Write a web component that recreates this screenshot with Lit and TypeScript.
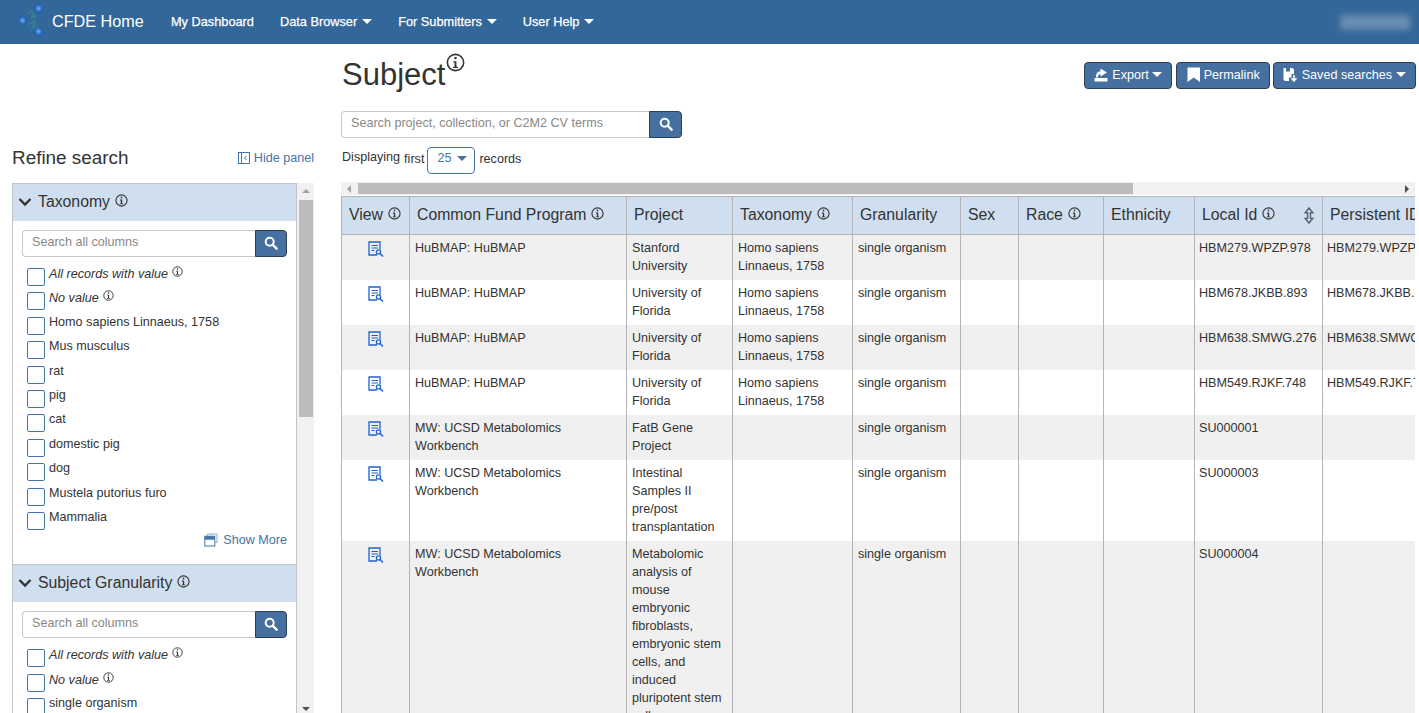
import { LitElement, html, css, svg } from "lit";
import { customElement } from "lit/decorators.js";

const columns = [
    { name: "View", width: 68, info: true },
    { name: "Common Fund Program", width: 217, info: true },
    { name: "Project", width: 106 },
    { name: "Taxonomy", width: 120, info: true },
    { name: "Granularity", width: 108 },
    { name: "Sex", width: 58 },
    { name: "Race", width: 85, info: true },
    { name: "Ethnicity", width: 91 },
    { name: "Local Id", width: 128, info: true, sort: true },
    { name: "Persistent ID", width: 140 },
];

const homo = "Homo sapiens Linnaeus, 1758";
const hubmap = "HuBMAP: HuBMAP";
const mw = "MW: UCSD Metabolomics Workbench";

const rows = [
    [hubmap, "Stanford University", homo, "HBM279.WPZP.978", "HBM279.WPZP.978"],
    [hubmap, "University of Florida", homo, "HBM678.JKBB.893", "HBM678.JKBB.893"],
    [hubmap, "University of Florida", homo, "HBM638.SMWG.276", "HBM638.SMWG.276"],
    [hubmap, "University of Florida", homo, "HBM549.RJKF.748", "HBM549.RJKF.748"],
    [mw, "FatB Gene Project", "", "SU000001", ""],
    [mw, "Intestinal Samples II pre/post transplantation", "", "SU000003", ""],
    [mw, "Metabolomic analysis of mouse embryonic fibroblasts, embryonic stem cells, and induced pluripotent stem cells", "", "SU000004", ""],
];

const taxa = ["Homo sapiens Linnaeus, 1758", "Mus musculus", "rat", "pig", "cat", "domestic pig", "dog", "Mustela putorius furo", "Mammalia"];

const searchIcon = html`<svg class="search-icon" viewBox="0 0 16 16"><circle cx="6.5" cy="6.5" r="4.6" fill="none" stroke="currentColor" stroke-width="2.2"/><path d="M10 10l4.4 4.4" stroke="currentColor" stroke-width="2.8" stroke-linecap="round"/></svg>`;

const infoIcon = html`<svg class="info" viewBox="0 0 14 14"><circle cx="7" cy="7" r="6" fill="none" stroke="currentColor" stroke-width="1.2"/><rect x="6.2" y="2.9" width="1.6" height="1.7" fill="currentColor"/><path d="M5.3 6h2.4v4.1h1.1v1H5.2v-1h1.1V7H5.3z" fill="currentColor"/></svg>`;

const chevron = html`<svg class="chevron" viewBox="0 0 14 10"><path d="M1.5 2l5.5 5.5L12.5 2" fill="none" stroke="currentColor" stroke-width="2.4"/></svg>`;

const viewIcon = html`<svg class="view-icon" viewBox="0 0 16 16"><path d="M9 14H1V1h11v7.500" fill="none" stroke="currentColor" stroke-width="1.300"/><path d="M3.500 4.500h6.500M3.500 7h6.500M3.500 9.500h3" stroke="currentColor" stroke-width="1"/><circle cx="10.500" cy="11" r="2.100" fill="none" stroke="currentColor" stroke-width="1.300"/><path d="M12 12.500l3 3" stroke="currentColor" stroke-width="1.500"/></svg>`;

const logo = svg`
    <defs>
        <radialGradient id="ball" cx="0.55" cy="0.45" r="0.55">
            <stop offset="0" stop-color="#78aef0"/>
            <stop offset="0.55" stop-color="#2468b8"/>
            <stop offset="1" stop-color="#2f6296"/>
        </radialGradient>
    </defs>
    <path d="M17 15l7-4-2 8 5-3M18 26l7-4-2 8 5-3" fill="none" stroke="#33888f" stroke-width="2" opacity="0.8"/>
    <circle cx="28" cy="10" r="5.600" fill="url(#ball)"/>
    <circle cx="12" cy="22" r="5.600" fill="url(#ball)"/>
    <circle cx="28" cy="33" r="5.600" fill="url(#ball)"/>
`;

@customElement("app-root")
export class AppRoot extends LitElement {
    static override styles = css`
        :host {
            display: block;
            height: 713px;
            overflow: hidden;
            background: #fff;
            color: #333;
            font-family: "Liberation Sans", Arial, sans-serif;
            font-size: 12.6px;
        }

        /* navbar */
        .navbar {
            display: flex;
            align-items: center;
            height: 44px;
            background: #336699;
            color: #fff;
            font-weight: 400;
        }
        .brand {
            display: flex;
            align-items: center;
            margin-left: 10px;
            padding-bottom: 2px;
            font-size: 16.2px;
            width: 161px;
        }
        .brand svg {
            width: 42px;
            height: 44px;
            flex: none;
        }
        .nav-item {
            display: flex;
            align-items: center;
            gap: 5px;
            margin-right: 26px;
            padding-bottom: 1px;
            font-size: 12.75px;
            -webkit-text-stroke: 0.25px #fff;
        }
        .caret {
            display: inline-block;
            width: 0;
            height: 0;
            border-left: 5px solid transparent;
            border-right: 5px solid transparent;
            border-top: 5px solid currentColor;
        }
        .user {
            margin-left: auto;
            margin-right: 9px;
            width: 70px;
            height: 15px;
            background: rgba(255, 255, 255, 0.26);
            filter: blur(3px);
        }

        .page {
            display: flex;
            align-items: flex-start;
        }

        /* left panel */
        .side {
            flex: none;
            width: 302px;
            margin-left: 12px;
            margin-right: 27px;
            padding-top: 103px;
        }
        .side-head {
            display: flex;
            align-items: center;
            justify-content: space-between;
            height: 22px;
            margin-bottom: 14px;
        }
        .side-head h2 {
            margin: 0;
            font-size: 18.9px;
            font-weight: 400;
        }
        .hide-panel {
            display: flex;
            align-items: center;
            gap: 4px;
            color: #4674a7;
        }
        .hide-panel svg {
            width: 12px;
            height: 12px;
        }
        .side-scroll {
            display: flex;
            height: 530px;
            overflow: hidden;
        }
        .facets {
            width: 285px;
            box-sizing: border-box;
            border: 1px solid #c4c4c4;
            border-bottom: none;
            flex: none;
            overflow: hidden;
        }
        .facet + .facet {
            border-top: 1px solid #c4c4c4;
        }
        .facet-head {
            display: flex;
            align-items: center;
            height: 37px;
            padding: 0 0 1px 5px;
            box-sizing: border-box;
            background: #cfdfef;
            font-size: 15.8px;
        }
        .chevron {
            width: 14px;
            height: 10px;
            margin-right: 6px;
        }
        .facet-head .info {
            width: 13px;
            height: 13px;
            margin: -4px 0 0 5px;
        }
        .facet-body {
            padding: 9px 9px 0;
        }
        .search {
            display: flex;
            height: 27px;
        }
        .search .field {
            flex: 1;
            min-width: 0;
            box-sizing: border-box;
            display: flex;
            align-items: center;
            padding: 0 0 4px 9px;
            border: 1px solid #c8c8c8;
            border-right: none;
            border-radius: 4px 0 0 4px;
            color: #888;
        }
        .search .go {
            flex: none;
            width: 32px;
            box-sizing: border-box;
            display: flex;
            align-items: center;
            justify-content: center;
            padding-bottom: 2px;
            background: #46709f;
            border: 1px solid #2c3e50;
            border-radius: 0 4px 4px 0;
            color: #fff;
        }
        .search-icon {
            width: 14px;
            height: 14px;
        }
        .choices {
            margin-top: 9px;
            padding-left: 5px;
        }
        .choice {
            display: flex;
            height: 24.4px;
            gap: 4px;
        }
        .box {
            flex: none;
            width: 16px;
            height: 16px;
            margin-top: 2px;
            border: 1px solid #4674a7;
            border-radius: 2px;
        }
        .choice span {
            line-height: 14px;
        }
        .choice.special span {
            font-style: italic;
        }
        .choice .info {
            width: 11px;
            height: 11px;
            margin-left: 4px;
            vertical-align: 1px;
        }
        .more {
            display: flex;
            align-items: center;
            justify-content: flex-end;
            gap: 5px;
            height: 24px;
            margin-top: -6px;
            margin-bottom: 12px;
            color: #4674a7;
        }
        .more svg {
            width: 14px;
            height: 14px;
        }
        .vbar {
            position: relative;
            width: 17px;
            flex: none;
            background: #f1f1f1;
        }
        .vbar .thumb {
            position: absolute;
            left: 2px;
            right: 1px;
            top: 17px;
            height: 217px;
            background: #bcbcbc;
        }
        .vbar .up,
        .vbar .down {
            position: absolute;
            left: 5px;
            width: 0;
            height: 0;
            border-left: 4px solid transparent;
            border-right: 4px solid transparent;
        }
        .vbar .up {
            top: 6px;
            border-bottom: 4px solid #a3a3a3;
        }
        .vbar .down {
            bottom: 2px;
            border-top: 4px solid #505050;
        }

        /* main column */
        .main {
            flex: none;
            width: 1074px;
        }
        .title-row {
            display: flex;
            justify-content: space-between;
            height: 67px;
        }
        h1 {
            margin: 9px 0 0 1px;
            font-size: 31px;
            font-weight: 400;
            line-height: 40px;
        }
        h1 .info {
            width: 19px;
            height: 19px;
            vertical-align: 13px;
            margin-left: 1px;
        }
        .actions {
            display: flex;
            gap: 3px;
            margin-top: 18px;
            height: 27px;
            margin-right: -1px;
        }
        .btn {
            display: flex;
            align-items: center;
            gap: 5px;
            box-sizing: border-box;
            padding: 0 9px 2px;
            background: #46709f;
            border: 1px solid #2d3e50;
            border-radius: 4px;
            color: #fff;
            white-space: nowrap;
        }
        .btn.export {
            gap: 4px;
            margin-right: 1px;
        }
        .btn.permalink {
            gap: 3px;
            padding-left: 10px;
        }
        .btn svg {
            width: 14px;
            height: 15px;
            flex: none;
        }
        .btn .caret {
            margin-left: -1px;
        }
        .main-search {
            width: 341px;
        }
        .main-search .go {
            width: 33px;
        }
        .display-row {
            display: flex;
            align-items: center;
            height: 27px;
            margin-top: 9px;
            padding-left: 1px;
        }
        .display-row .lead {
            margin-bottom: 7px;
        }
        .display-row .first {
            margin: 0 3px 3px 4px;
        }
        .display-row .last {
            margin: 0 0 3px 4px;
        }
        .select {
            display: flex;
            align-items: center;
            gap: 6px;
            box-sizing: border-box;
            width: 48px;
            height: 27px;
            padding: 0 0 5px 9px;
            border: 1px solid #4674a7;
            border-radius: 4px;
            color: #4674a7;
        }
        .hbar {
            position: relative;
            height: 13px;
            margin-top: 8px;
            background: #f1f1f1;
        }
        .hbar .thumb {
            position: absolute;
            left: 17px;
            width: 775px;
            top: 1px;
            height: 11px;
            background: #bcbcbc;
        }
        .hbar .left,
        .hbar .right {
            position: absolute;
            top: 3px;
            width: 0;
            height: 0;
            border-top: 4px solid transparent;
            border-bottom: 4px solid transparent;
        }
        .hbar .left {
            left: 6px;
            border-right: 4px solid #a3a3a3;
        }
        .hbar .right {
            right: 6px;
            border-left: 4px solid #505050;
        }
        .table-wrap {
            overflow: hidden;
            margin-top: 1px;
        }
        table {
            table-layout: fixed;
            width: 1121px;
            border-collapse: collapse;
        }
        th {
            height: 38px;
            box-sizing: border-box;
            padding: 0 7px 1px;
            background: #cfdfef;
            border: 1px solid #b4b4b4;
            font-size: 15.8px;
            font-weight: 400;
            text-align: left;
            white-space: nowrap;
            overflow: hidden;
        }
        th .cell {
            display: flex;
            align-items: center;
        }
        th .info {
            width: 13px;
            height: 13px;
            margin: -4px 0 0 5px;
        }
        th .sort {
            width: 12px;
            height: 17px;
            margin-left: auto;
            color: #55606b;
        }
        td {
            box-sizing: border-box;
            padding: 4px 5px 5px;
            border-left: 1px solid #b4b4b4;
            border-right: 1px solid #b4b4b4;
            line-height: 18px;
            vertical-align: top;
            overflow: hidden;
            white-space: normal;
        }
        tbody tr:nth-child(odd) td {
            background: #f0f0f0;
        }
        td.ids {
            white-space: nowrap;
            padding-left: 4px;
        }
        td.view {
            text-align: center;
            color: #1f62d0;
        }
        .view-icon {
            display: block;
            width: 16px;
            height: 16px;
            margin: 2px auto 0;
        }
    `;

    private renderSearch (placeholder: string) {
        return html`
            <div class="search">
                <div class="field">${placeholder}</div>
                <div class="go">${searchIcon}</div>
            </div>
        `;
    }

    private renderChoice (label: string, special = false) {
        return html`
            <div class="choice ${special ? "special" : ""}">
                <div class="box"></div>
                <span>${label}${special ? infoIcon : ""}</span>
            </div>
        `;
    }

    private renderFacet (title: string, info: boolean, values: string[], more: boolean) {
        return html`
            <div class="facet">
                <div class="facet-head">${chevron}${title}${info ? infoIcon : ""}</div>
                <div class="facet-body">
                    ${this.renderSearch("Search all columns")}
                    <div class="choices">
                        ${this.renderChoice("All records with value", true)}
                        ${this.renderChoice("No value", true)}
                        ${values.map((v) => this.renderChoice(v))}
                    </div>
                    ${more ? html`
                        <div class="more">
                            <svg viewBox="0 0 14 14"><path d="M3.500 2.500V1h9.500v8.500h-1.500" fill="none" stroke="#8fa7c2"/><rect x="0.800" y="3.200" width="10" height="9.800" fill="none" stroke="currentColor"/><rect x="0.800" y="3.200" width="10" height="3.500" fill="currentColor"/></svg>
                            Show More
                        </div>
                    ` : ""}
                </div>
            </div>
        `;
    }

    private renderSide () {
        return html`
            <aside class="side">
                <div class="side-head">
                    <h2>Refine search</h2>
                    <div class="hide-panel">
                        <svg viewBox="0 0 12 12"><rect x="0.500" y="0.500" width="11" height="11" fill="none" stroke="currentColor"/><path d="M3.500 0.500v11" stroke="currentColor"/><path d="M8.500 4L6.500 6l2 2" fill="none" stroke="currentColor"/></svg>
                        Hide panel
                    </div>
                </div>
                <div class="side-scroll">
                    <div class="facets">
                        ${this.renderFacet("Taxonomy", true, taxa, true)}
                        ${this.renderFacet("Subject Granularity", true, ["single organism"], false)}
                    </div>
                    <div class="vbar">
                        <div class="up"></div>
                        <div class="thumb"></div>
                        <div class="down"></div>
                    </div>
                </div>
            </aside>
        `;
    }

    private renderActions () {
        return html`
            <div class="actions">
                <div class="btn export">
                    <svg viewBox="0 0 14 15"><rect x="0.500" y="11" width="13" height="3.500" fill="currentColor"/><path d="M2 10.500V9c0-2.800 1.800-4.500 4.500-4.800V1.500L13 5.500 6.500 9.500V7C5 7.200 4 8.400 3.800 10.500z" fill="currentColor"/></svg>
                    Export<span class="caret"></span>
                </div>
                <div class="btn permalink">
                    <svg viewBox="0 0 14 15"><path d="M0.500 0.500h12.500V15L6.750 10.500 0.500 15z" fill="currentColor"/></svg>
                    Permalink
                </div>
                <div class="btn">
                    <svg viewBox="0 0 14 15"><path d="M0.500 1h9L11 2.500V7H8.500v3.500H6V14H2L0.500 12.500z" fill="currentColor"/><rect x="3" y="1" width="4" height="3.500" fill="#46709f"/><path d="M11 8v5.500M8.500 11.200l2.500 2.800 2.500-2.800" fill="none" stroke="currentColor" stroke-width="1.600"/></svg>
                    Saved searches<span class="caret"></span>
                </div>
            </div>
        `;
    }

    private renderTable () {
        return html`
            <div class="table-wrap">
                <table>
                    <colgroup>
                        ${columns.map((c) => html`<col style="width:${c.width}px">`)}
                    </colgroup>
                    <thead>
                        <tr>
                            ${columns.map((c) => html`
                                <th>
                                    <div class="cell">
                                        ${c.name}${c.info ? infoIcon : ""}
                                        ${c.sort ? html`<svg class="sort" viewBox="0 0 12 18"><path d="M6 1L2 6H4.500v6H2l4 5 4-5H7.500V6H10z" fill="none" stroke="currentColor" stroke-width="1.500"/></svg>` : ""}
                                    </div>
                                </th>
                            `)}
                        </tr>
                    </thead>
                    <tbody>
                        ${rows.map((r) => html`
                            <tr>
                                <td class="view">${viewIcon}</td>
                                <td>${r[0]}</td>
                                <td>${r[1]}</td>
                                <td>${r[2]}</td>
                                <td>single organism</td>
                                <td></td>
                                <td></td>
                                <td></td>
                                <td class="ids">${r[3]}</td>
                                <td class="ids">${r[4]}</td>
                            </tr>
                        `)}
                    </tbody>
                </table>
            </div>
        `;
    }

    override render () {
        return html`
            <nav class="navbar">
                <div class="brand"><svg viewBox="0 0 42 44">${logo}</svg>CFDE Home</div>
                <div class="nav-item">My Dashboard</div>
                <div class="nav-item">Data Browser<span class="caret"></span></div>
                <div class="nav-item">For Submitters<span class="caret"></span></div>
                <div class="nav-item">User Help<span class="caret"></span></div>
                <div class="user"></div>
            </nav>
            <div class="page">
                ${this.renderSide()}
                <main class="main">
                    <div class="title-row">
                        <h1>Subject${infoIcon}</h1>
                        ${this.renderActions()}
                    </div>
                    <div class="main-search">${this.renderSearch("Search project, collection, or C2M2 CV terms")}</div>
                    <div class="display-row">
                        <span class="lead">Displaying</span><span class="first">first</span>
                        <div class="select">25<span class="caret"></span></div>
                        <span class="last">records</span>
                    </div>
                    <div class="hbar">
                        <div class="left"></div>
                        <div class="thumb"></div>
                        <div class="right"></div>
                    </div>
                    ${this.renderTable()}
                </main>
            </div>
        `;
    }
}
